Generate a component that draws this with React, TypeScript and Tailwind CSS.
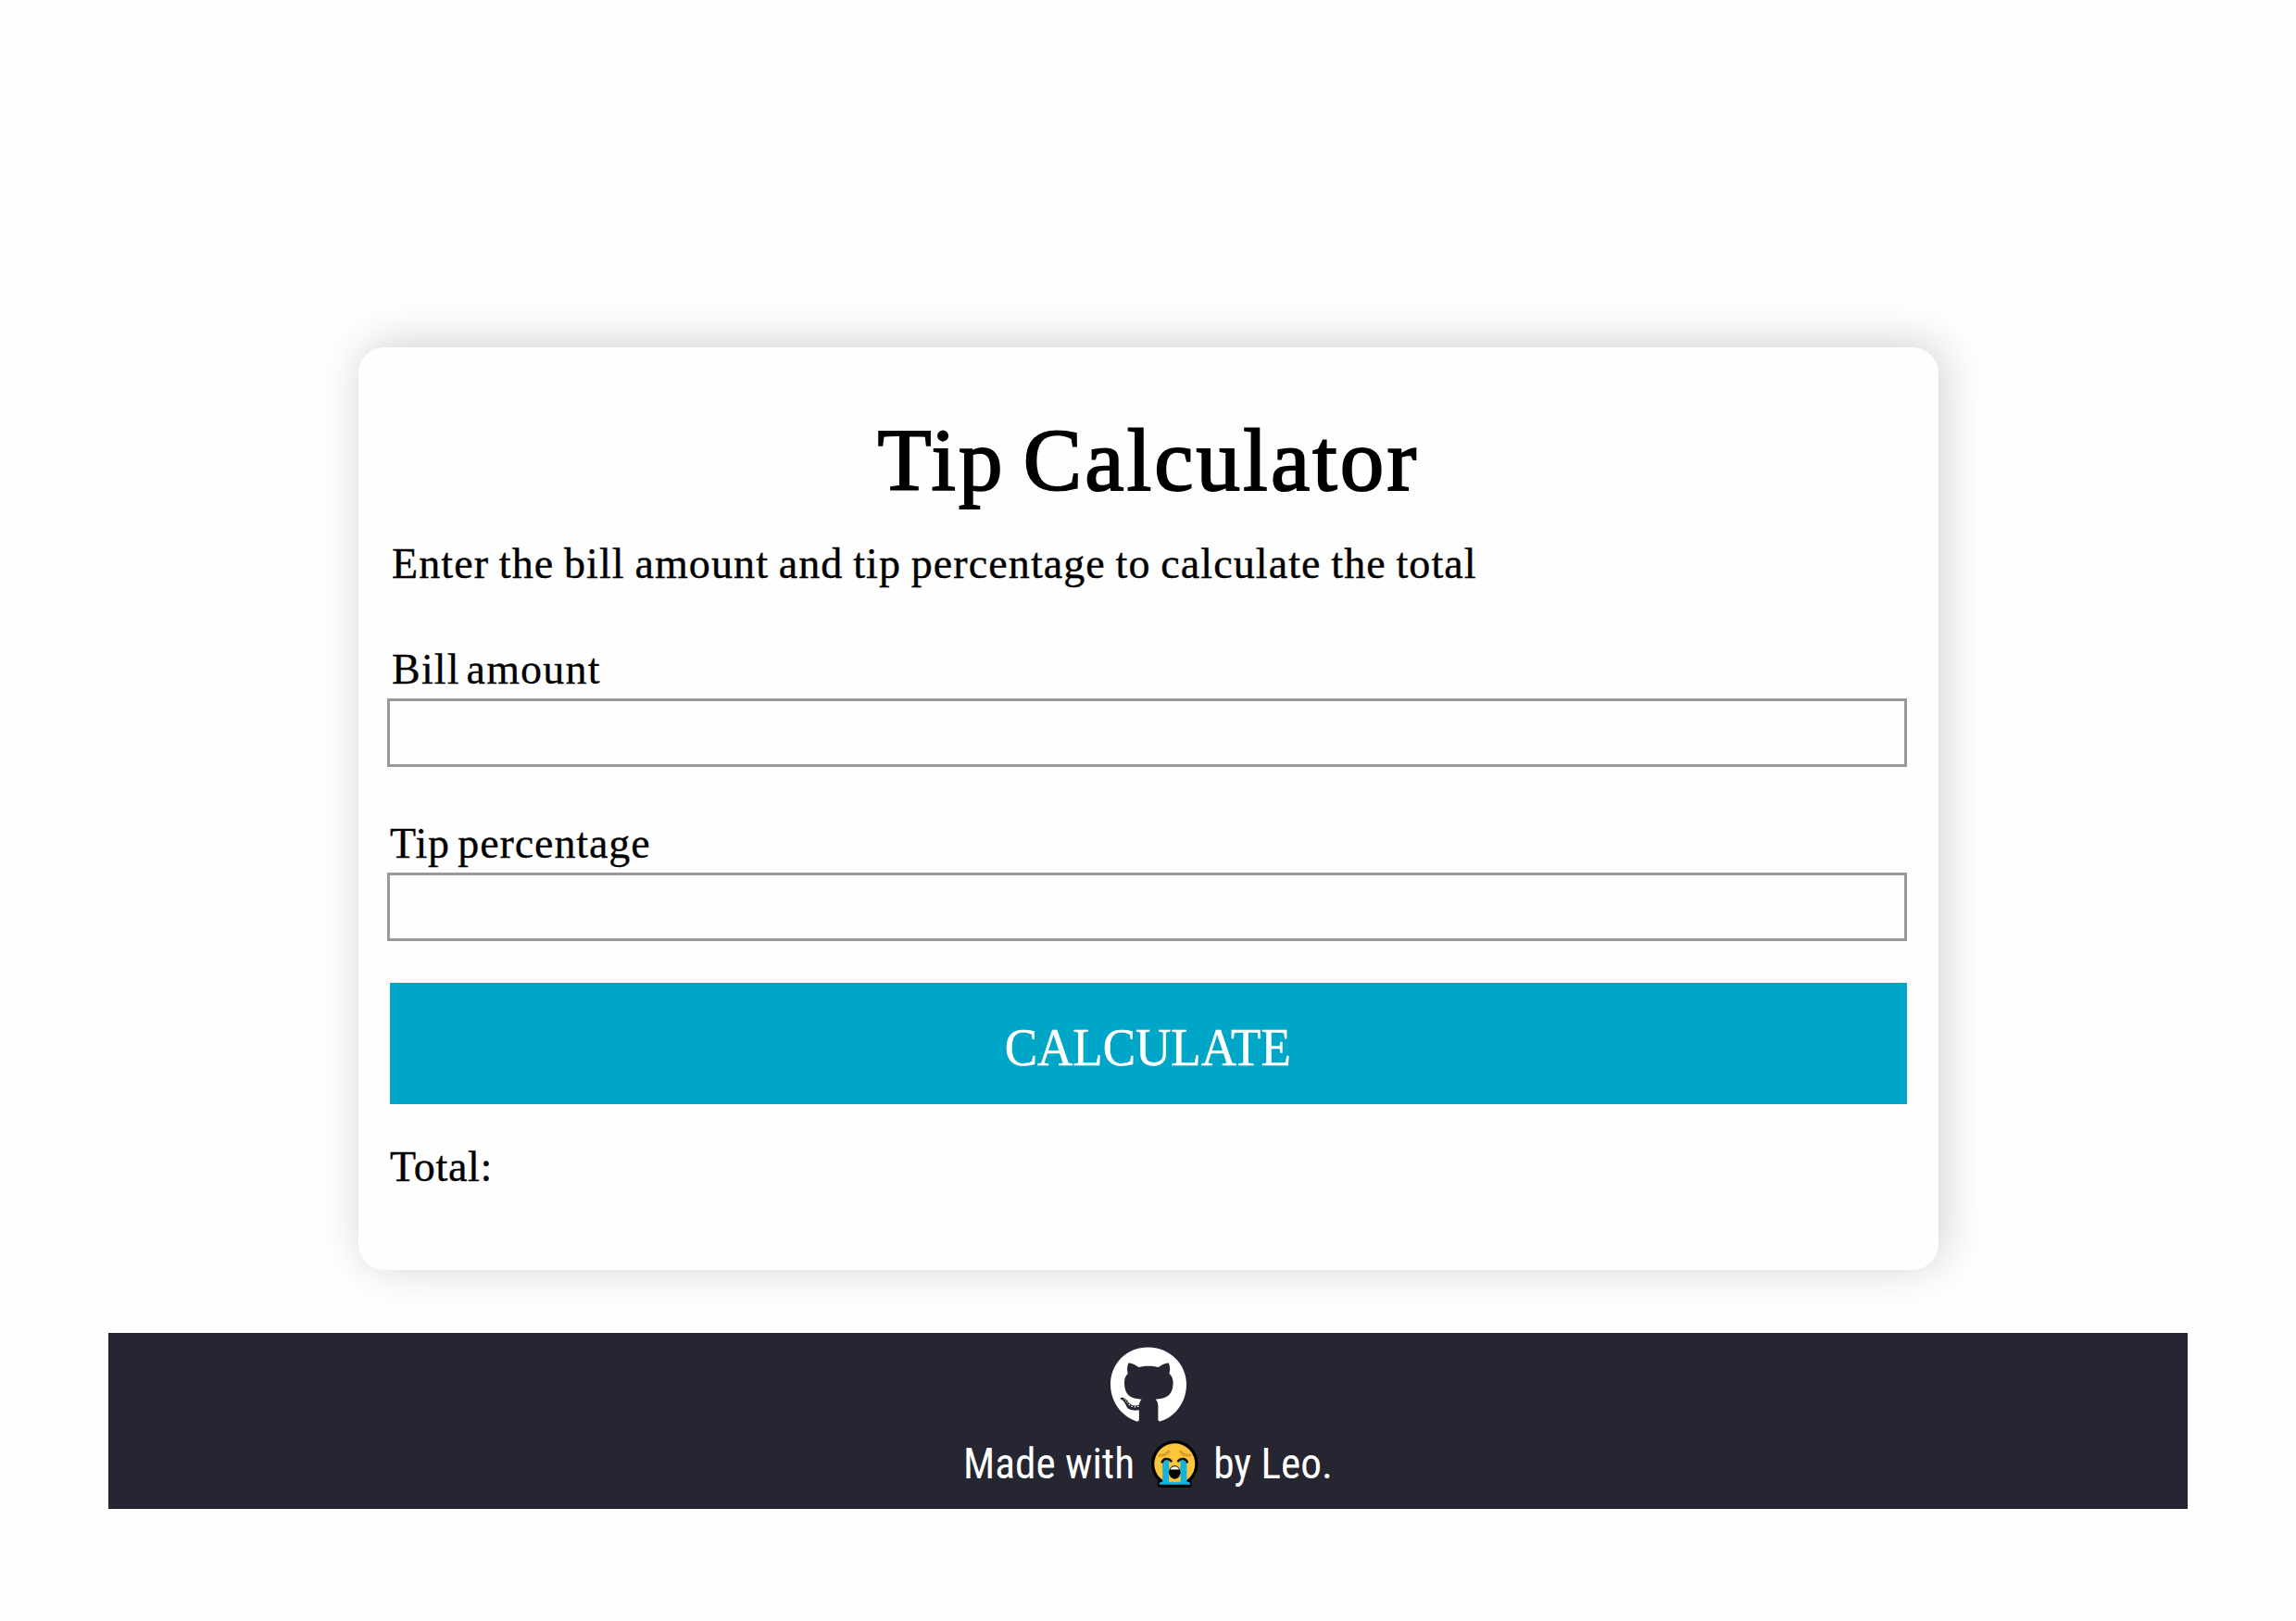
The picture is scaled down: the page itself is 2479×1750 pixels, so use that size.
import { FaGithub } from "react-icons/fa";

function CryingFace() {
  return (
    <svg viewBox="0 0 52 52" className="h-[52px] w-[52px] shrink-0">
      <circle cx="25.3" cy="25.3" r="25.3" fill="#000" />
      <rect x="6.500" y="42.500" width="37.600" height="8.500" rx="3.500" fill="#000" />
      <circle cx="25.3" cy="25.3" r="22" fill="#fdc63a" />
      <path d="M9 16.200c4 .3 7.500-1 10-4.200M41.600 16.200c-4 .3-7.500-1-10-4.200" fill="none" stroke="#dd9a2e" strokeWidth="3" strokeLinecap="round" />
      <path d="M12.200 21.500h7v23h12.200v-23h7v23c2.200 0 3.600 1 3.900 3.300H8.500c.3-2.300 1.500-3.300 3.700-3.300z" fill="#12b3dc" />
      <path d="M19.200 44.500h12.200V37H19.200z" fill="#fdc63a" />
      <path d="M11.800 23.300c1.500-4.300 7.300-4.300 9.600-1M29.200 22.300c2.300-3.300 8.100-3.300 9.600 1" fill="none" stroke="#111" strokeWidth="2.600" strokeLinecap="round" />
      <ellipse cx="25.3" cy="34.500" rx="6.300" ry="7.200" fill="#000" />
      <path d="M20.600 31.400c1.300-4.200 8.100-4.200 9.400 0z" fill="#fff" />
    </svg>
  );
}

function Field({ id, label, className, labelClassName }: { id: string; label: string; className: string; labelClassName: string }) {
  return (
    <div className={className}>
      <label
        htmlFor={id}
        className={`block h-[61px] text-[46px] leading-[60px] [-webkit-text-stroke:0.3px_black] ${labelClassName}`}
      >
        {label}
      </label>
      <input
        id={id}
        className="-ml-[3px] block h-[74px] w-[1641px] border-[3px] border-[#999] bg-transparent px-4 text-[40px] outline-none"
      />
    </div>
  );
}

export default function App() {
  return (
    <div className="flex h-[1750px] w-[2479px] flex-col bg-[#fefefe] pt-[375px] font-['Liberation_Serif',serif] text-black">
      <main className="ml-[387px] h-[996px] w-[1706px] shrink-0 rounded-[28px] bg-[#fefefe] pl-[34px] shadow-[5px_-4px_48px_rgba(0,0,0,0.18)]">
        <h1 className="-ml-[34px] h-[200px] pt-[62px] text-center text-[95px] leading-[120px] tracking-[3.2px] [-webkit-text-stroke:2px_black] [word-spacing:-8px]">
          Tip Calculator
        </h1>
        <p className="h-[118px] pl-[2px] text-[46px] leading-[67px] tracking-[1.1px] [-webkit-text-stroke:0.4px_black] [word-spacing:-1.900px]">
          Enter the bill amount and tip percentage to calculate the total
        </p>
        <Field id="bill" label="Bill amount" className="h-[188px]" labelClassName="pl-[2px] tracking-[1.2px] [word-spacing:-6px]" />
        <Field id="tip" label="Tip percentage" className="h-[180px]" labelClassName="tracking-[0.9px] [word-spacing:-4px]" />
        <button className="flex h-[131px] w-[1638px] items-center justify-center bg-[#00a6c7] pt-[8px] pr-[2px] text-[57px] text-white">
          <span className="scale-x-93 [-webkit-text-stroke:0.5px_white]">CALCULATE</span>
        </button>
        <p className="mt-[38px] text-[46px] leading-[60px] tracking-[0.75px] [-webkit-text-stroke:0.4px_black]">Total:</p>
      </main>
      <footer className="ml-[117px] mt-[68px] flex h-[190px] w-[2245px] shrink-0 flex-col items-center bg-[#252632] pt-[14px] text-white">
        <FaGithub className="h-[85px] w-[82px] shrink-0" />
        <div className="mt-[13px] flex h-[60px] items-center font-['Roboto_Condensed',Roboto,sans-serif] text-[45.300px] leading-[60px] [font-stretch:75%]">
          <span>Made with</span>
          <span className="ml-[18px] mr-[15px] flex">
            <CryingFace />
          </span>
          <span>by Leo.</span>
        </div>
      </footer>
    </div>
  );
}
